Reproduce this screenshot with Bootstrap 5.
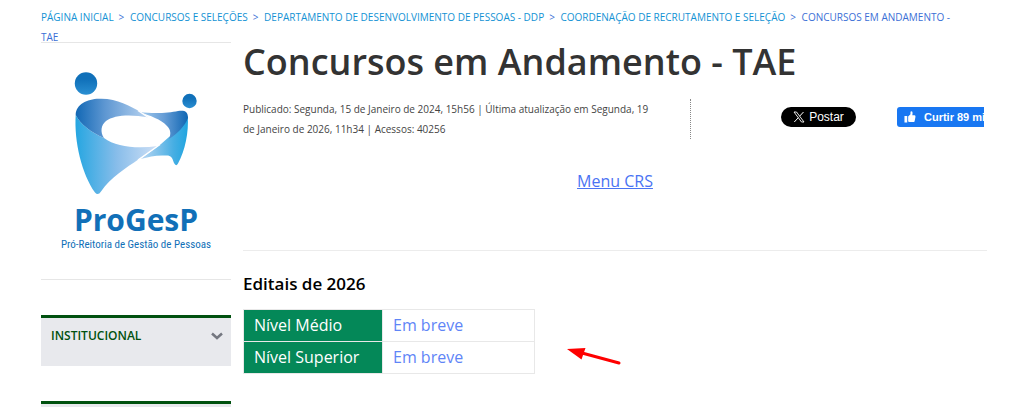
<!DOCTYPE html>
<html lang="pt-BR">
<head>
<meta charset="utf-8">
<meta name="viewport" content="width=device-width, initial-scale=1">
<title>Concursos em Andamento - TAE</title>
<link href="https://cdn.jsdelivr.net/npm/bootstrap@5.3.0/dist/css/bootstrap.min.css" rel="stylesheet">
<style>
body { font-family: "Open Sans", sans-serif; color: #000; background: #fff; }
a { color: #4a73f3; }
.page { padding: 7px 37px 0 41px; }
.trail { font-size: 10px; line-height: 20px; color: #3b6fd6; text-transform: uppercase; margin-bottom: -5px; padding-right: 24px; }
.trail a { color: #1292d4; text-decoration: none; }
.sep { margin: 0 3px 0 5px; }
.side { flex: 0 0 190px; }
.brand { border-top: 1px solid #e6e6e6; border-bottom: 1px solid #e6e6e6; height: 238px; margin-bottom: 35px; }
.brand-name { font: 700 30px/36px "Open Sans", sans-serif; fill: #1170b8; }
.brand-sub { font: 400 11px/16px "Roboto Condensed", "Liberation Sans Narrow", "Open Sans Condensed", "Open Sans", sans-serif; fill: #1170b8; }
.module { border: 0; border-top: 3px solid #00510f; background: #e8e9ed; color: #00510f; height: 51px; padding: 0 8px 13px 10px; margin-bottom: 35px; font-size: 12px; font-weight: 600; }
.module-next { border-top: 3px solid #00510f; background: #e8e9ed; height: 6px; }
.title { font-size: 36px; line-height: 40px; font-weight: 600; color: #333; margin-bottom: 17px; }
.meta { font-size: 10px; line-height: 20px; color: #444; }
.info { flex: 0 0 448px; padding-right: 32px; border-right: 1px dotted #888; }
.share { height: 20px; margin-top: 8px; padding-right: 3px; overflow: hidden; }
.btn-x { width: 75px; height: 20px; flex: none; border-radius: 10px; background: #000; color: #fff; font: 400 12px/20px "Liberation Sans", sans-serif; border: 0; padding: 0; margin-right: 41px; }
.btn-like { width: 110px; height: 20px; flex: none; border-radius: 3px; background: #1877f2; color: #fff; font: 700 11px/20px "Liberation Sans", sans-serif; border: 0; padding: 0 7px; }
.share-list { width: 203px; overflow: hidden; }
.menu-link { font-size: 16px; line-height: 24px; margin-top: 30px; padding-bottom: 57px; border-bottom: 1px solid #ececec; }
.section-title { font-size: 17px; line-height: 24px; font-weight: 600; margin: 21px 0 13px; }
.levels { width: 292px; font-size: 16px; line-height: 24px; border-collapse: collapse; }
.levels th, .levels td { border: 1px solid #e8e8e8; padding: 3px 10px 4px; }
.levels th { width: 139px; background: #048858; color: #fff; font-weight: 400; }
.levels td a { text-decoration: none; color: #5f85f7; }
.pointer { margin: 38px 0 0 32px; }
</style>
</head>
<body>
<div class="page">
  <nav class="trail" aria-label="Trilha">
    <a href="#">Página inicial</a><span class="sep">&gt;</span> <a href="#">Concursos e Seleções</a><span class="sep">&gt;</span> <a href="#">Departamento de Desenvolvimento de Pessoas - DDP</a><span class="sep">&gt;</span> <a href="#">Coordenação de Recrutamento e Seleção</a><span class="sep">&gt;</span> <span>Concursos em Andamento - TAE</span>
  </nav>
  <div class="d-flex">
    <aside class="side">
      <div class="brand">
        <svg width="190" height="236" viewBox="41 43 190 236" role="img" aria-label="ProGesP">
          <defs>
            <linearGradient id="dot" x1="0" y1="0" x2="0" y2="1"><stop offset="0.3" stop-color="#1070b9"/><stop offset="1" stop-color="#2a8fd2"/></linearGradient>
            <linearGradient id="bandL"><stop offset="0" stop-color="#1268b5"/><stop offset="0.4" stop-color="#5e97d2"/><stop offset="1" stop-color="#b9d4f1"/></linearGradient>
            <linearGradient id="bandR"><stop offset="0" stop-color="#a4cbee"/><stop offset="0.5" stop-color="#669dd6"/><stop offset="1" stop-color="#0f66b3"/></linearGradient>
            <linearGradient id="legL"><stop offset="0" stop-color="#25a6e1"/><stop offset="0.5" stop-color="#88bdea"/><stop offset="1" stop-color="#cfe0f6"/></linearGradient>
            <linearGradient id="legR"><stop offset="0" stop-color="#bcd7f3"/><stop offset="0.7" stop-color="#46aee3"/><stop offset="1" stop-color="#1fa5e0"/></linearGradient>
          </defs>
          <circle cx="86" cy="83.500" r="11.200" fill="url(#dot)"/>
          <circle cx="189.500" cy="101" r="7.200" fill="url(#dot)"/>
          <path d="M75.700 115C74 142 82 174 95 192.500Q98 196 101 191.500C111 177 126 168 139 159L158 146C137 149 116 147 104 138C92 133 80 124 75.700 115Z" fill="url(#legL)"/>
          <path d="M187.700 116C189 132 185 151 178 163.500Q176 167 174 163C172 157 171 155 165 155.500C156 155 149 157 140.500 159L161 144L169 137C177 133 183 126 187.700 116Z" fill="url(#legR)"/>
          <path d="M75.700 115C76 104 87 99 99 98.700C117 98 129 106 141 112L149 117.500C130 114 114 115 106 121C101 125 100 132 104 138C92 133 80 124 75.700 115Z" fill="url(#bandL)"/>
          <path d="M140 112C153 114 169 113 178 111C184 110 188 111 188 118C185 126 177 134 169 139C171 134 171 130 167 126C161 119 150 116 140 112Z" fill="url(#bandR)"/>
          <path d="M138 110.500L149 118" stroke="#fff" stroke-width="1.500"/>
          <path d="M138 160L160 144.500" stroke="#fff" stroke-width="1.500"/>
          <text x="136" y="231" text-anchor="middle" class="brand-name">ProGesP</text>
          <text x="136" y="248" text-anchor="middle" class="brand-sub">Pró-Reitoria de Gestão de Pessoas</text>
        </svg>
      </div>
      <button type="button" class="module w-100 d-flex align-items-center justify-content-between">
        <span>INSTITUCIONAL</span>
        <svg width="12" height="8" viewBox="0 0 12 8" fill="none" stroke="#747780" stroke-width="2.500" aria-hidden="true"><path d="M1 1.500L6 6L11 1.500"/></svg>
      </button>
      <div class="module-next"></div>
    </aside>
    <main class="flex-grow-1 ms-2 ps-1">
      <h1 class="title">Concursos em Andamento - TAE</h1>
      <div class="d-flex justify-content-between">
        <div class="meta info">Publicado: Segunda, 15 de Janeiro de 2024, 15h56 | Última atualização em Segunda, 19 de Janeiro de 2026, 11h34 | Acessos: 40256</div>
        <div class="share">
          <div class="share-list d-flex">
            <button type="button" class="btn-x d-flex align-items-center justify-content-center gap-1">
              <svg width="12" height="12" viewBox="0 0 12 12" fill="none" stroke="#fff" aria-hidden="true"><path d="M1 1H3.500L11 11H8.500Z" stroke-width="0.900"/><path d="M10.500 1L6.600 5.200M5.300 6.700L1.300 11"/></svg>
              <span>Postar</span>
            </button>
            <button type="button" class="btn-like d-flex align-items-center gap-1 text-nowrap">
              <svg class="me-1" width="12" height="12" viewBox="0 0 13 13" fill="#fff" aria-hidden="true"><path d="M0.500 5.500H3.500V12.500H0.500ZM4.500 6L7 3.500V1.500Q7 0.300 8 0.300Q9.500 0.500 9.300 2.500L9 4.700H11.500Q12.700 5 12.400 6.400L11.500 11Q11.200 12 10 12H6Q5 12 4.500 11.500Z"/></svg>
              <span>Curtir 89 mil</span>
            </button>
          </div>
        </div>
      </div>
      <div class="menu-link text-center"><a href="#">Menu CRS</a></div>
      <h2 class="section-title">Editais de 2026</h2>
      <div class="d-flex align-items-start">
        <table class="levels">
          <tbody>
            <tr><th scope="row">Nível Médio</th><td><a href="#">Em breve</a></td></tr>
            <tr><th scope="row">Nível Superior</th><td><a href="#">Em breve</a></td></tr>
          </tbody>
        </table>
        <svg class="pointer" width="54" height="20" viewBox="0 0 54 20" aria-hidden="true"><path d="M15 6L52 16" stroke="#fe0000" stroke-width="3" stroke-linecap="round"/><path d="M0 2L18.500 1L14.500 12.500Z" fill="#fe0000"/></svg>
      </div>
    </main>
  </div>
</div>
<script src="https://cdn.jsdelivr.net/npm/bootstrap@5.3.0/dist/js/bootstrap.bundle.min.js"></script>
</body>
</html>
